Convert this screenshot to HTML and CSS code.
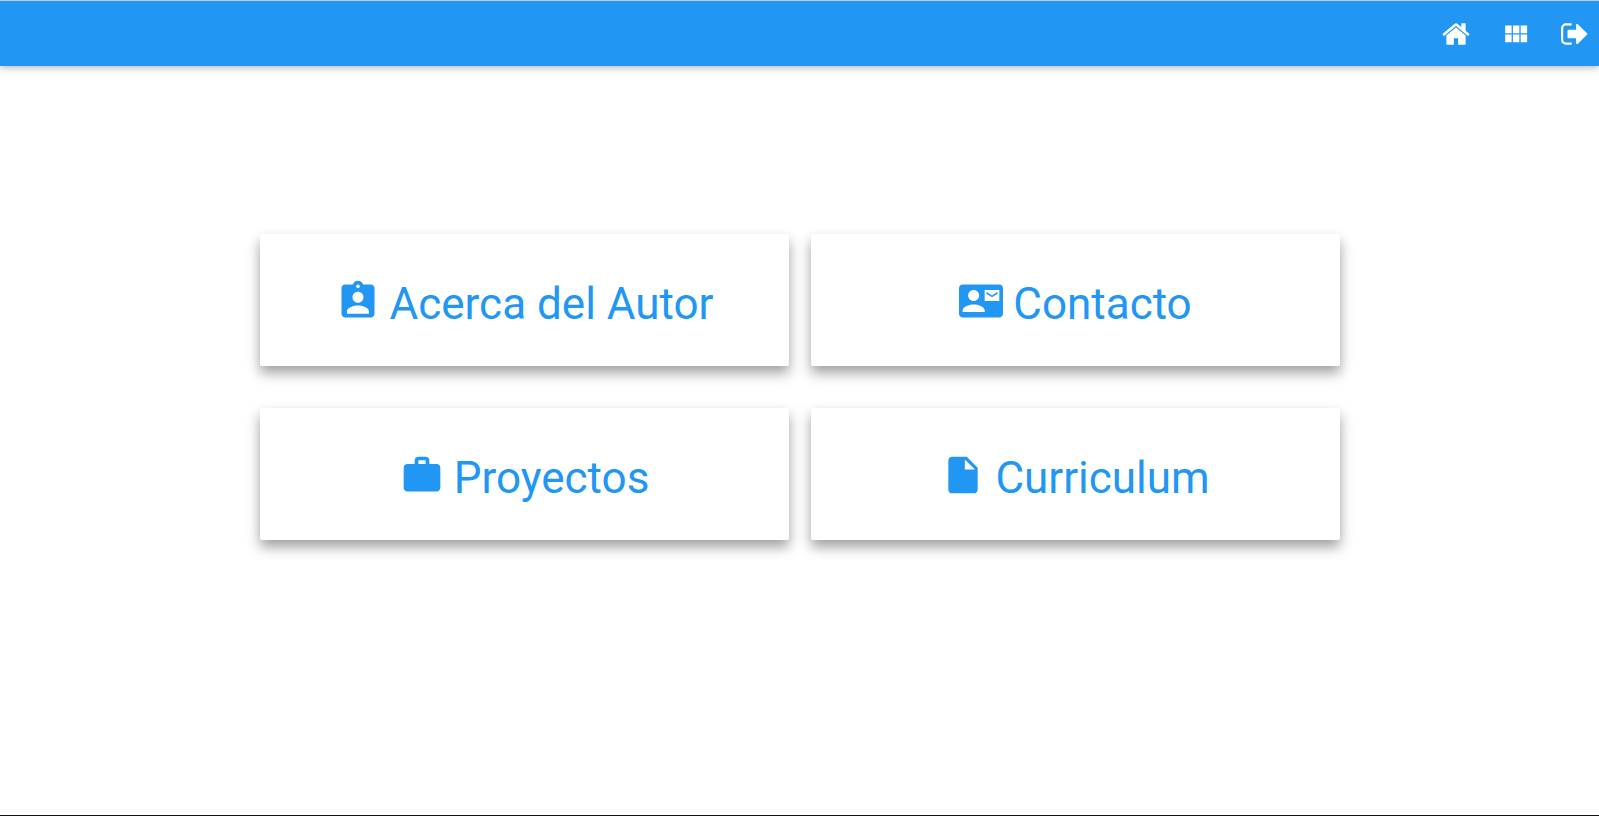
FILE: index.html
```html
<!DOCTYPE html>
<html lang="es">
<head>
<meta charset="utf-8">
<meta name="viewport" content="width=device-width, initial-scale=1">
<title>Portafolio</title>
<link rel="stylesheet" href="styles.css">
</head>
<body>
<header class="topbar">
  <nav class="topbar-nav" aria-label="Principal">
    <a href="#inicio" aria-label="Inicio"><svg class="nav-icon" viewBox="64 0 1664 1792" aria-hidden="true"><path d="M1472 992v480q0 26-19 45t-45 19h-384v-384h-256v384h-384q-26 0-45-19t-19-45v-480q0-1 .5-3t.5-3l575-474 575 474q1 2 1 6zm223-69l-62 74q-8 9-21 11h-3q-13 0-21-7l-692-577-692 577q-12 8-24 7-13-2-21-11l-62-74q-8-10-7-23.5t11-21.5l719-599q32-26 76-26t76 26l244 204v-195q0-14 9-23t23-9h192q14 0 23 9t9 23v408l219 182q10 8 11 21.5t-7 23.5z"/></svg></a>
    <a href="#secciones" aria-label="Secciones"><svg class="nav-icon nav-icon-grid" viewBox="0 0 24 24" aria-hidden="true"><path d="M4 11h5V5H4v6zm0 7h5v-6H4v6zm6 0h5v-6h-5v6zm6 0h5v-6h-5v6zm-6-7h5V5h-5v6zm6-6v6h5V5h-5z"/></svg></a>
    <a href="#salir" aria-label="Salir"><svg class="nav-icon" viewBox="64 0 1664 1792" aria-hidden="true"><path d="M704 1440q0 4 1 20t.5 26.5-3 23.5-10 19.5-20.5 6.5h-320q-119 0-203.5-84.5t-84.5-203.5v-704q0-119 84.5-203.5t203.5-84.5h320q13 0 22.5 9.5t9.5 22.5q0 4 1 20t.5 26.5-3 23.5-10 19.5-20.5 6.5h-320q-66 0-113 47t-47 113v704q0 66 47 113t113 47h312l11.5 1 11.5 3 8 5.5 7 9 2 13.5zm928-544q0 26-19 45l-544 544q-19 19-45 19t-45-19-19-45v-288h-448q-26 0-45-19t-19-45v-384q0-26 19-45t45-19h448v-288q0-26 19-45t45-19 45 19l544 544q19 19 19 45z"/></svg></a>
  </nav>
</header>
<main class="cards">
  <a class="card" href="#autor"><svg class="card-icon" viewBox="0 0 24 24" aria-hidden="true"><path d="M19 3h-4.180C14.400 1.840 13.300 1 12 1c-1.300 0-2.400.840-2.820 2H5c-1.100 0-2 .9-2 2v14c0 1.100.9 2 2 2h14c1.100 0 2-.9 2-2V5c0-1.100-.9-2-2-2zm-7 0c.55 0 1 .45 1 1s-.45 1-1 1-1-.45-1-1 .45-1 1-1zm0 4c1.660 0 3 1.340 3 3s-1.340 3-3 3-3-1.340-3-3 1.340-3 3-3zm6 12H6v-1.400c0-2 4-3.100 6-3.100s6 1.100 6 3.100V19z"/></svg><span>Acerca del Autor</span></a>
  <a class="card" href="#contacto"><svg class="card-icon" viewBox="0 0 24 24" aria-hidden="true"><path d="M21 8V7l-3 2-3-2v1l3 2 3-2zm1-5H2C.9 3 0 3.900 0 5v14c0 1.100.9 2 2 2h20c1.100 0 1.990-.9 1.990-2L24 5c0-1.100-.9-2-2-2zM8 6c1.660 0 3 1.340 3 3s-1.340 3-3 3-3-1.340-3-3 1.340-3 3-3zm6 12H2v-1c0-2 4-3.100 6-3.100s6 1.100 6 3.100v1zm8-6h-8V6h8v6z"/></svg><span>Contacto</span></a>
  <a class="card" href="#proyectos"><svg class="card-icon" viewBox="0 0 24 24" aria-hidden="true"><path d="M20 6h-4V4c0-1.110-.89-2-2-2h-4c-1.110 0-2 .89-2 2v2H4c-1.110 0-1.990.89-1.990 2L2 19c0 1.110.89 2 2 2h16c1.110 0 2-.89 2-2V8c0-1.110-.89-2-2-2zm-6 0h-4V4h4v2z"/></svg><span>Proyectos</span></a>
  <a class="card" href="#curriculum"><svg class="card-icon" viewBox="0 0 24 24" aria-hidden="true"><path d="M6 2c-1.100 0-1.990.9-1.990 2L4 20c0 1.100.89 2 1.990 2H18c1.100 0 2-.9 2-2V8l-6-6H6zm7 7V3.500L18.500 9H13z"/></svg><span>Curriculum</span></a>
</main>
<footer class="bottom-edge"></footer>
</body>
</html>
```
FILE: styles.css
```css
* {
  box-sizing: border-box;
}

body {
  display: flex;
  flex-direction: column;
  min-height: 100vh;
  margin: 0;
  background: #fff;
  font-family: Roboto, "Liberation Sans", sans-serif;
}

.topbar {
  padding-right: 10px;
  border-top: 1px solid #c8c8c8;
  background: #2196f3;
  box-shadow: 0 2px 5px 0 rgba(0, 0, 0, 0.16), 0 2px 10px 0 rgba(0, 0, 0, 0.12);
}

.topbar-nav {
  display: flex;
  justify-content: flex-end;
  align-items: center;
  gap: 30px;
  height: 65px;
  padding-top: 1px;
}

.topbar-nav a {
  display: flex;
}

.nav-icon {
  width: 28px;
  height: 30px;
  fill: #fff;
}

.nav-icon-grid {
  width: 31px;
  height: 31px;
}

.cards {
  display: grid;
  grid-template-columns: 1fr 1fr;
  gap: 42px 22px;
  width: 100%;
  padding: 168px 259px 60px 260px;
}

.card {
  display: flex;
  justify-content: center;
  align-items: center;
  gap: 10px;
  padding: 38px 16px 36px;
  border-radius: 2px;
  background: #fff;
  box-shadow: 0 7px 13px 0 rgba(0, 0, 0, 0.38);
  color: #2196f3;
  font-size: 44px;
  line-height: 52px;
  text-decoration: none;
}

.card span {
  padding-top: 6px;
}

.card-icon {
  width: 44px;
  height: 44px;
  fill: currentColor;
}

.bottom-edge {
  height: 1px;
  margin-top: auto;
  background: #101010;
}

@media (max-width: 1200px) {
  .cards {
    grid-template-columns: 1fr;
    padding: 60px 24px;
  }
}
```
